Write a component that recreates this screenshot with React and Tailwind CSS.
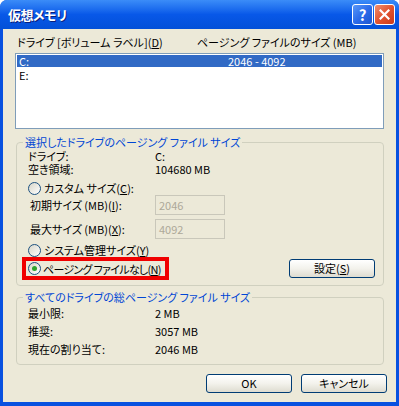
import React from 'react';

const font = "font-['Noto_Sans_CJK_JP',sans-serif] [font-feature-settings:'palt']";

const Radio = ({ checked }) => (
  <span className="w-[13px] h-[13px] shrink-0 rounded-full border border-[#1c5180] bg-linear-to-br from-[#d8d6c9] to-white flex items-center justify-center">
    {checked && <span className="w-[5px] h-[5px] rounded-full bg-[#2ea32e]" />}
  </span>
);

const XpButton = ({ children, className = '' }) => (
  <button
    type="button"
    className={`w-[86px] h-[19px] rounded-[3px] border border-[#003c74] bg-linear-to-b from-white via-[#f3f2ec] to-[#dedcd0] flex items-center justify-center text-[11px] leading-none text-black ${className}`}
  >
    {children}
  </button>
);

// XP style group box, caption sits on the top border
const Group = ({ title, children, className = '', bodyClass = '' }) => (
  <fieldset className={`border border-[#d0d0bf] rounded-[4px] p-0 ${className}`}>
    <legend className="ml-[6px] px-[2px] text-[11px] leading-[14px] text-[#0046d5] whitespace-nowrap">{title}</legend>
    <div className={bodyClass}>{children}</div>
  </fieldset>
);

const InfoRow = ({ label, value, h = 'h-[13px]' }) => (
  <div className={`flex items-center ${h}`}>
    <span className="w-[127px]">{label}</span>
    <span>{value}</span>
  </div>
);

export default function App() {
  return (
    <div className={`w-[399px] h-[406px] bg-[#0851e0] flex flex-col rounded-t-[7px] overflow-hidden text-[11px] leading-[12px] text-black ${font}`}>
      {/* title bar */}
      <div className="h-[29px] shrink-0 bg-linear-to-b from-[#3b8cf8] via-[#0858e8] to-[#0350d8] flex items-center pl-[8px] pr-[4px]">
        <span className="text-white font-bold text-[13px] leading-[16px] tracking-[-0.5px] [text-shadow:1px_1px_0_#0a1e7a]">仮想メモリ</span>
        <div className="ml-auto flex gap-[1px]">
          <div className="w-[21px] h-[21px] rounded-[3px] border border-white bg-linear-to-br from-[#5a97f7] via-[#2c6cea] to-[#1d55d0] flex items-center justify-center text-white font-bold text-[15px] leading-none">?</div>
          <div className="w-[21px] h-[21px] rounded-[3px] border border-white bg-linear-to-br from-[#f08d6c] via-[#e2532f] to-[#c8391a] flex items-center justify-center">
            <svg width="11" height="11" viewBox="0 0 11 11">
              <path d="M1.5 1.5 L9.5 9.5 M9.5 1.5 L1.5 9.5" stroke="white" strokeWidth="2.2" strokeLinecap="square" />
            </svg>
          </div>
        </div>
      </div>

      {/* body */}
      <div className="flex-1 mx-[3px] mb-[4px] bg-[#ece9d8] flex flex-col pl-[12px] pr-[12px] pt-[6px]">
        <div className="flex h-[14px] items-center">
          <span className="w-[182px] pl-[2px]">ドライブ [ボリューム ラベル](<u>D</u>)</span>
          <span>ページング ファイルのサイズ (MB)</span>
        </div>

        <div className="mt-[4px] h-[76px] bg-white border border-[#7f9db9] p-[1px]">
          <div className="h-[12px] bg-[#316ac5] text-white flex items-center">
            <span className="w-[211px] pl-[2px]">C:</span>
            <span>2046 - 4092</span>
          </div>
          <div className="h-[12px] flex items-center pl-[2px] mt-[2px]">E:</div>
        </div>

        <Group
          title="選択したドライブのページング ファイル サイズ"
          className="mt-[6px] ml-[1px] w-[368px]"
          bodyClass="pb-[5px] pl-[5px] pr-[8px]"
        >
          <div className="pl-[6px]">
            <InfoRow label="ドライブ:" value="C:" />
            <InfoRow label="空き領域:" value="104680 MB" />
          </div>
          <div className="mt-[6px] h-[14px] flex items-center gap-[3px] pl-[6px]">
            <Radio />
            <span>カスタム サイズ(<u>C</u>):</span>
          </div>
          <div className="h-[20px] flex items-center pl-[8px]">
            <span className="w-[125px]">初期サイズ (MB)(<u>I</u>):</span>
            <div className="w-[70px] h-[20px] border border-[#c9c7ba] flex items-center px-[3px] text-[#aca899]">2046</div>
          </div>
          <div className="mt-[4px] h-[20px] flex items-center pl-[8px]">
            <span className="w-[125px]">最大サイズ (MB)(<u>X</u>):</span>
            <div className="w-[70px] h-[20px] border border-[#c9c7ba] flex items-center px-[3px] text-[#aca899]">4092</div>
          </div>
          <div className="mt-[4px] h-[14px] flex items-center gap-[3px] pl-[6px]">
            <Radio />
            <span>システム管理サイズ(<u>Y</u>)</span>
          </div>
          <div className="h-[23px] flex items-center">
            <div className="h-[23px] w-[147px] border-[4px] border-[#f00000] flex items-center gap-[2px] pl-[2px] whitespace-nowrap overflow-hidden">
              <Radio checked />
              <span className="tracking-[-0.7px]">ページング ファイルなし(<u>N</u>)</span>
            </div>
            <XpButton className="ml-auto">設定(<u>S</u>)</XpButton>
          </div>
        </Group>

        <Group
          title="すべてのドライブの総ページング ファイル サイズ"
          className="mt-[4px] ml-[1px] w-[368px]"
          bodyClass="pb-[6px] pl-[11px]"
        >
          <InfoRow label="最小限:" value="2 MB" h="h-[18px]" />
          <InfoRow label="推奨:" value="3057 MB" h="h-[18px]" />
          <InfoRow label="現在の割り当て:" value="2046 MB" h="h-[18px]" />
        </Group>

        <div className="mt-[9px] flex justify-end gap-[9px] mr-[-3px]">
          <XpButton>OK</XpButton>
          <XpButton>キャンセル</XpButton>
        </div>
      </div>
    </div>
  );
}
